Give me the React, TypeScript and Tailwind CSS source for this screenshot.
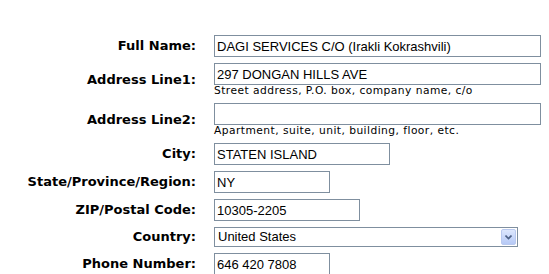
const labelCls =
  "pr-[18px] text-right font-bold text-[13px] text-black whitespace-nowrap";
const inputCls =
  "block h-[22px] border border-[#7f8f9f] bg-white px-[2px] text-[13px] text-black outline-none";

function Field({
  label,
  value,
  width,
  help,
}: {
  label: string;
  value: string;
  width: string;
  help?: string;
}) {
  return (
    <>
      <div className={labelCls}>{label}</div>
      <div>
        <input
          readOnly
          value={value}
          className={`${inputCls} ${width}`}
          style={{ fontFamily: '"Liberation Sans", Arial, sans-serif' }}
        />
        {help && (
          <div className="h-[12px] text-[10.7px] leading-[12px] tracking-[0.45px] text-black">
            {help}
          </div>
        )}
      </div>
    </>
  );
}

export default function App() {
  return (
    <div
      className="h-[274px] w-[549px] overflow-hidden bg-white pt-[35px]"
      style={{ fontFamily: '"DejaVu Sans", Verdana, sans-serif' }}
    >
      <div className="grid grid-cols-[214px_auto] items-center gap-y-[6px]">
        <Field label="Full Name:" value="DAGI SERVICES C/O (Irakli Kokrashvili)" width="w-[327px]" />
        <Field
          label="Address Line1:"
          value="297 DONGAN HILLS AVE"
          width="w-[327px]"
          help="Street address, P.O. box, company name, c/o"
        />
        <Field
          label="Address Line2:"
          value=""
          width="w-[327px]"
          help="Apartment, suite, unit, building, floor, etc."
        />
        <Field label="City:" value="STATEN ISLAND" width="w-[176px]" />
        <Field label="State/Province/Region:" value="NY" width="w-[116px]" />
        <Field label="ZIP/Postal Code:" value="10305-2205" width="w-[146px]" />

        <div className={labelCls}>Country:</div>
        <div>
          <div className="flex h-[20px] w-[304px] items-center border border-[#7f8f9f] bg-white">
            <span
              className="flex-1 pl-[3px] text-[13px] text-black"
              style={{ fontFamily: '"Liberation Sans", Arial, sans-serif' }}
            >
              United States
            </span>
            <span className="mr-[1px] flex h-[16px] w-[15px] items-center justify-center rounded-[2px] border border-[#b9c9ef] bg-gradient-to-b from-[#dde7fd] to-[#b6c9f6]">
              <svg width="7" height="5" viewBox="0 0 7 5">
                <path d="M0.5 0.5 L3.5 3.5 L6.5 0.5" fill="none" stroke="#4d6185" strokeWidth="1.6" />
              </svg>
            </span>
          </div>
        </div>

        <Field label="Phone Number:" value="646 420 7808" width="w-[116px]" />
      </div>
    </div>
  );
}
